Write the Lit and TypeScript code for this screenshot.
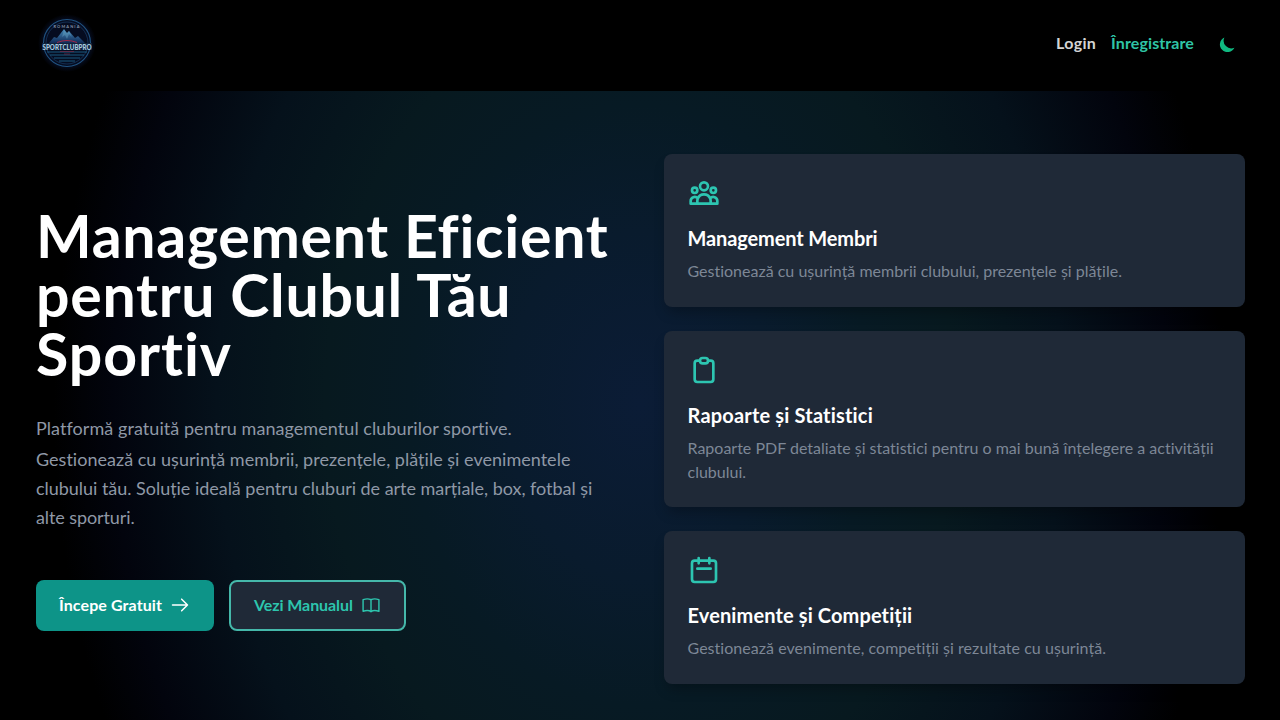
import { LitElement, html, css, svg } from "lit";
import { customElement } from "lit/decorators.js";

const stroke = (w: number, body: unknown, cls: string) =>
  html`<svg class=${cls} viewBox="0 0 24 24" fill="none" stroke="currentColor" stroke-width=${w} stroke-linecap="round" stroke-linejoin="round">${body}</svg>`;

const members = svg`<path d="M17 20h5v-2a3 3 0 0 0-5.356-1.857M17 20H7m10 0v-2c0-.656-.126-1.283-.356-1.857M7 20H2v-2a3 3 0 0 1 5.356-1.857M7 20v-2c0-.656.126-1.283.356-1.857m0 0a5.002 5.002 0 0 1 9.288 0M15 7a3 3 0 1 1-6 0 3 3 0 0 1 6 0zm6 3a2 2 0 1 1-4 0 2 2 0 0 1 4 0zM7 10a2 2 0 1 1-4 0 2 2 0 0 1 4 0z"/>`;
const clipboard = svg`<path d="M9 5H7a2 2 0 0 0-2 2v12a2 2 0 0 0 2 2h10a2 2 0 0 0 2-2V7a2 2 0 0 0-2-2h-2M9 5a2 2 0 0 0 2 2h2a2 2 0 0 0 2-2M9 5a2 2 0 0 1 2-2h2a2 2 0 0 1 2 2"/>`;
const calendar = svg`<path d="M8 3v4M16 3v4M7 11h10M5 21h14a2 2 0 0 0 2-2V7a2 2 0 0 0-2-2H5a2 2 0 0 0-2 2v12a2 2 0 0 0 2 2z"/>`;

const features = [
  { icon: members, title: "Management Membri", cls: "t1", lines: ["Gestionează cu ușurință membrii clubului, prezențele și plățile."] },
  { icon: clipboard, title: "Rapoarte și Statistici", cls: "t2", lines: ["Rapoarte PDF detaliate și statistici pentru o mai bună înțelegere a activității", "clubului."] },
  { icon: calendar, title: "Evenimente și Competiții", cls: "t3", lines: ["Gestionează evenimente, competiții și rezultate cu ușurință."] },
];

@customElement("app-root")
export class AppRoot extends LitElement {
  static styles = css`
    :host { display: flex; flex-direction: column; height: 720px; overflow: hidden; background: #000; font-family: Lato, "Noto Sans", sans-serif; font-variant-ligatures: none; color: #fff; }
    * { box-sizing: border-box; }
    header { height: 91px; flex: none; display: flex; align-items: center; justify-content: space-between; padding: 0 36px; background: #000; }
    .logo { width: 62px; height: 62px; margin: -5px 0 0 0; overflow: visible; }
    nav { display: flex; align-items: center; margin-top: -5px; font-size: 16px; font-weight: 700; line-height: 24px; }
    .login { color: #d4d4d4; margin-right: 15px; letter-spacing: .3px; }
    .register { color: #2fc4a6; margin-right: 24px; letter-spacing: .1px; }
    .moon { width: 19px; height: 19px; color: #10b981; margin: 2px 7px 0 0; }
    main { flex: 1; min-height: 0; display: grid; grid-template-columns: 581px 581px; column-gap: 47px; padding: 63px 36px 0; background: radial-gradient(ellipse 605px 790px at 640px 314px, #0b1c36 0, #091b2d 22%, #071a24 38%, #07191f 52%, #05111b 70%, #02040d 87%, #000 97%); }
    .hero { padding-top: 52px; }
    h1 { margin: 0; font-size: 59px; line-height: 59px; font-weight: 700; white-space: nowrap; }
    h1 span, .lead span, .desc span { display: block; white-space: nowrap; width: max-content; }
    .h1a { letter-spacing: .7px; }
    .h1b { letter-spacing: .7px; }
    .h1c { letter-spacing: .95px; }
    .lead { margin-top: 31px; font-size: 18px; line-height: 29.4px; color: #8f98a6; }
    .l1 { line-height: 31px; margin-top: -1px; letter-spacing: .06px; }
    .l2 { line-height: 31px; letter-spacing: .02px; }
    .l3 { line-height: 27.500px; letter-spacing: -.03px; }
    .l4 { letter-spacing: -.1px; }
    .actions { display: flex; gap: 16px; margin-top: 48px; }
    .btn { height: 51px; display: flex; align-items: center; border-radius: 8px; font-size: 16px; font-weight: 700; padding: 0 23px; white-space: nowrap; }
    .btn span { margin-top: -1px; }
    .primary { background: #0d9488; width: 178px; }
    .primary span { letter-spacing: .1px; }
    .secondary { background: #1f2937; color: #2dc5ae; width: 177px; border: 2px solid #45b8aa; margin-left: -1px; }
    .secondary span { letter-spacing: -.08px; }
    .bicon { width: 20px; height: 20px; margin: 0 0 0 8px; flex: none; }
    .cards { display: flex; flex-direction: column; gap: 24px; }
    .card { background: #1f2937; border-radius: 8px; padding: 23px 23.5px; height: 153px; box-shadow: 0 8px 14px -4px rgba(0,0,0,.3); }
    .card.tall { height: 176px; }
    .ficon { display: block; width: 32px; height: 32px; color: #2dc5b1; }
    h2 { margin: 15px 0 7px; font-size: 20px; line-height: 28px; font-weight: 700; white-space: nowrap; width: max-content; }
    .t1 { letter-spacing: -.12px; }
    .t2 { letter-spacing: .18px; }
    .t3 { letter-spacing: .12px; }
    .desc { font-size: 16px; line-height: 23.7px; color: #7d8796; }
    .t3 + .desc { letter-spacing: .04px; }
  `;

  render() {
    return html`
      <header>
        <svg class="logo" viewBox="0 0 62 62">
          <defs>
            <linearGradient id="m" x1="0" y1="0" x2="0" y2="1"><stop offset="0" stop-color="#4589b8"/><stop offset="1" stop-color="#102b58"/></linearGradient>
            <radialGradient id="g"><stop offset=".75" stop-color="#071029"/><stop offset="1" stop-color="#000"/></radialGradient>
          </defs>
          <circle cx="31" cy="31" r="29" fill="url(#g)"/>
          <circle cx="31" cy="31" r="23.5" fill="#050c20" stroke="#205381" stroke-width="1.1"/>
          <circle cx="31" cy="31" r="21" fill="none" stroke="#17375f" stroke-width=".8"/>
          <path d="M13 31l5-6 3 1 7-9 3 4 2-2 6 7 3-2 7 7z" fill="url(#m)"/>
          <path d="M28 18l-2 7 3-2 2 4 2-5 3 3-3-6-2 2z" fill="#7cb9d4" opacity=".35"/>
          <text x="31" y="16" text-anchor="middle" font-size="4" font-weight="700" letter-spacing="1.1" fill="#8393a8">ROMANIA</text>
          <path d="M21 30.500q10-4 20 0" stroke="#a22645" fill="none"/>
          <rect x="6" y="31" width="50" height="7" fill="#10243e"/>
          <text x="6.500" y="37.500" font-size="7.500" font-weight="900" textLength="49" lengthAdjust="spacingAndGlyphs" fill="#a9cbe0">SPORTCLUBPRO</text>
          <path d="M11 40h40M14 43h34M18 46h26M23 49h16" stroke="#1b587f" stroke-width="1"/>
          <path d="M24 39.500h14M28 42h6" stroke="#7a2845" stroke-width=".7"/>
        </svg>
        <nav><span class="login">Login</span><span class="register">Înregistrare</span>
          <svg class="moon" viewBox="0 0 20 20" fill="currentColor"><path d="M17.293 13.293A8 8 0 0 1 6.707 2.707a8.001 8.001 0 1 0 10.586 10.586z"/></svg></nav>
      </header>
      <main>
        <section class="hero">
          <h1><span class="h1a">Management Eficient</span><span class="h1b">pentru Clubul Tău</span><span class="h1c">Sportiv</span></h1>
          <div class="lead"><span class="l1">Platformă gratuită pentru managementul cluburilor sportive.</span><span class="l2">Gestionează cu ușurință membrii, prezențele, plățile și evenimentele</span><span class="l3">clubului tău. Soluție ideală pentru cluburi de arte marțiale, box, fotbal și</span><span class="l4">alte sporturi.</span></div>
          <div class="actions">
            <div class="btn primary"><span>Începe Gratuit</span>${stroke(1.8, svg`<path d="M3 12h18M14 5l7 7-7 7"/>`, "bicon")}</div>
            <div class="btn secondary"><span>Vezi Manualul</span>${stroke(1.7, svg`<path d="M12 5v15M12 6C10 4.500 6 4.500 2.500 5.500v14c3.500-1 7.500-1 9.500.5 2-1.500 6-1.500 9.500-.5v-14C18 4.500 14 4.500 12 6z"/>`, "bicon")}</div>
          </div>
        </section>
        <section class="cards">
          ${features.map((f) => html`<article class="card ${f.lines.length > 1 ? "tall" : ""}">${stroke(2, f.icon, "ficon")}<h2 class=${f.cls}>${f.title}</h2><div class="desc">${f.lines.map((l) => html`<span>${l}</span>`)}</div></article>`)}
        </section>
      </main>`;
  }
}
